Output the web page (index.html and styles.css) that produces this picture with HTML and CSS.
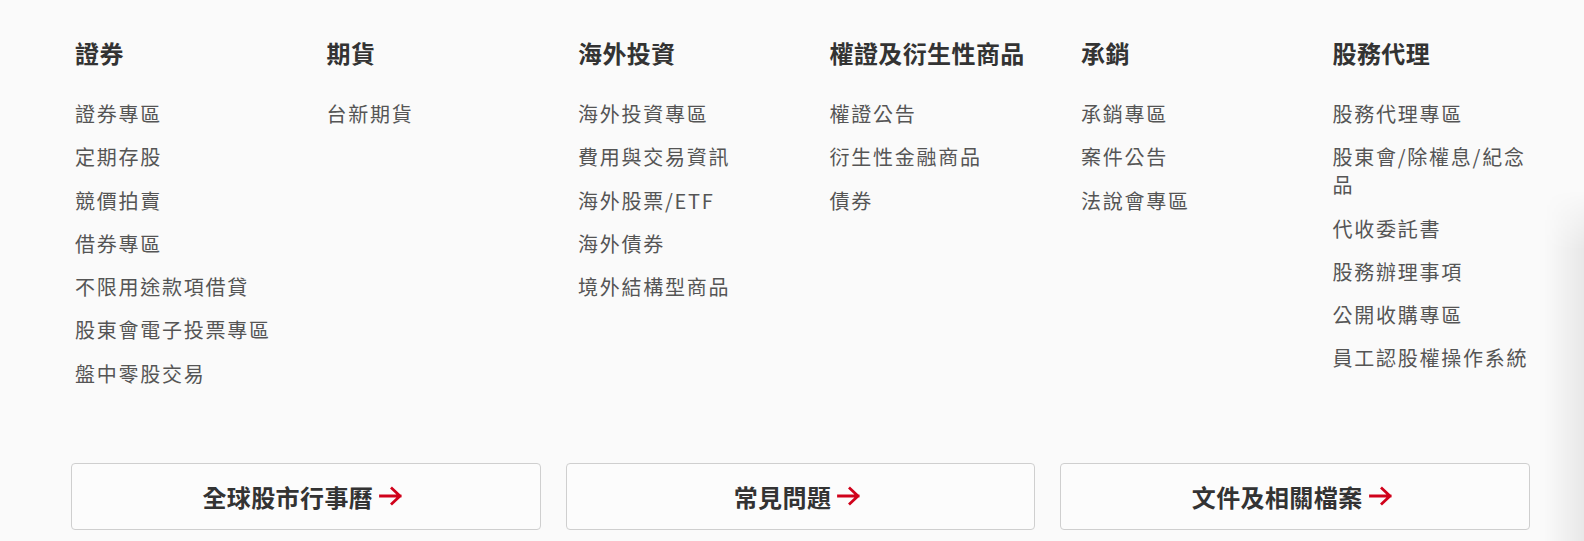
FILE: index.html
```html
<!DOCTYPE html>
<html lang="zh-Hant">
<head>
<meta charset="utf-8">
<title>Footer links</title>
<link rel="stylesheet" href="styles.css">
</head>
<body>
<div class="page">
  <nav class="links">
    <div class="col">
      <h3 class="col-title">證券</h3>
      <ul class="col-list">
        <li><a href="#">證券專區</a></li>
        <li><a href="#">定期存股</a></li>
        <li><a href="#">競價拍賣</a></li>
        <li><a href="#">借券專區</a></li>
        <li><a href="#">不限用途款項借貸</a></li>
        <li><a href="#">股東會電子投票專區</a></li>
        <li><a href="#">盤中零股交易</a></li>
      </ul>
    </div>
    <div class="col">
      <h3 class="col-title">期貨</h3>
      <ul class="col-list">
        <li><a href="#">台新期貨</a></li>
      </ul>
    </div>
    <div class="col">
      <h3 class="col-title">海外投資</h3>
      <ul class="col-list">
        <li><a href="#">海外投資專區</a></li>
        <li><a href="#">費用與交易資訊</a></li>
        <li><a href="#">海外股票/ETF</a></li>
        <li><a href="#">海外債券</a></li>
        <li><a href="#">境外結構型商品</a></li>
      </ul>
    </div>
    <div class="col">
      <h3 class="col-title">權證及衍生性商品</h3>
      <ul class="col-list">
        <li><a href="#">權證公告</a></li>
        <li><a href="#">衍生性金融商品</a></li>
        <li><a href="#">債券</a></li>
      </ul>
    </div>
    <div class="col">
      <h3 class="col-title">承銷</h3>
      <ul class="col-list">
        <li><a href="#">承銷專區</a></li>
        <li><a href="#">案件公告</a></li>
        <li><a href="#">法說會專區</a></li>
      </ul>
    </div>
    <div class="col">
      <h3 class="col-title">股務代理</h3>
      <ul class="col-list">
        <li><a href="#">股務代理專區</a></li>
        <li><a href="#">股東會/除權息/紀念品</a></li>
        <li><a href="#">代收委託書</a></li>
        <li><a href="#">股務辦理事項</a></li>
        <li><a href="#">公開收購專區</a></li>
        <li><a href="#">員工認股權操作系統</a></li>
      </ul>
    </div>
  </nav>
  <div class="buttons">
    <a class="btn" href="#">全球股市行事曆<svg class="arrow" viewBox="0 0 24 20" width="24" height="20"><path d="M1.5 10H21M13 2.5L21 10L13 17.5" fill="none" stroke="#d0021b" stroke-width="2.8" stroke-linecap="square" stroke-linejoin="miter"/></svg></a>
    <a class="btn" href="#">常見問題<svg class="arrow" viewBox="0 0 24 20" width="24" height="20"><path d="M1.5 10H21M13 2.5L21 10L13 17.5" fill="none" stroke="#d0021b" stroke-width="2.8" stroke-linecap="square" stroke-linejoin="miter"/></svg></a>
    <a class="btn" href="#">文件及相關檔案<svg class="arrow" viewBox="0 0 24 20" width="24" height="20"><path d="M1.5 10H21M13 2.5L21 10L13 17.5" fill="none" stroke="#d0021b" stroke-width="2.8" stroke-linecap="square" stroke-linejoin="miter"/></svg></a>
  </div>
</div>
<div class="edge-shadow"></div>
</body>
</html>
```

FILE: styles.css
```css
html, body {
  margin: 0;
  padding: 0;
}
body {
  background: #fafafa;
  font-family: "Noto Sans CJK TC", "Noto Sans", sans-serif;
  height: 541px;
  overflow: hidden;
  position: relative;
}
.page {
  width: 1459px;
  margin-left: 71px;
  padding-top: 35px;
}
.links {
  display: grid;
  grid-template-columns: repeat(6, 200px);
  column-gap: 51.5px;
  padding: 0 4px;
}
.col-title {
  margin: 0;
  font-size: 24px;
  line-height: 36px;
  font-weight: 700;
  letter-spacing: 0.4px;
  color: #333;
  white-space: nowrap;
}
.col-list {
  list-style: none;
  margin: 29px 0 0;
  padding: 0;
  display: flex;
  flex-direction: column;
  gap: 15.3px;
}
.col-list li {
  font-size: 20px;
  line-height: 28px;
  letter-spacing: 1.75px;
}
.col-list a {
  color: #555;
  text-decoration: none;
}
.buttons {
  display: grid;
  grid-template-columns: repeat(3, 1fr);
  column-gap: 25px;
  margin-top: 75px;
}
.btn {
  display: flex;
  align-items: center;
  justify-content: center;
  gap: 6px;
  height: 65px;
  padding-right: 6px;
  border: 1px solid #cfcfcf;
  border-radius: 4px;
  background: #fcfcfc;
  color: #333;
  font-size: 24px;
  font-weight: 700;
  letter-spacing: 0.4px;
  text-decoration: none;
}
.arrow {
  display: block;
}
.edge-shadow {
  position: absolute;
  right: 0;
  top: 190px;
  bottom: 0;
  width: 40px;
  background: linear-gradient(to right, rgba(0,0,0,0), rgba(0,0,0,0.07));
  -webkit-mask-image: linear-gradient(to bottom, transparent, #000 60px);
  mask-image: linear-gradient(to bottom, transparent, #000 60px);
}
```
